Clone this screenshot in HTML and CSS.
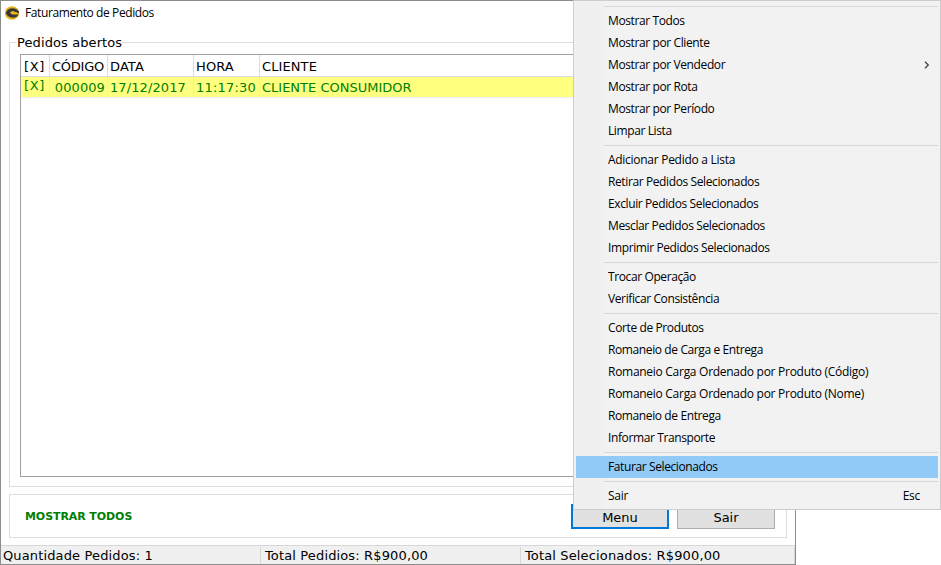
FILE: index.html
```html
<!DOCTYPE html>
<html lang="pt-BR">
<head>
<meta charset="utf-8">
<title>Faturamento de Pedidos</title>
<link rel="stylesheet" href="styles.css">
</head>
<body>
<main class="window">
  <header class="titlebar">
    <svg class="logo" viewBox="0 0 16 16">
      <ellipse cx="8" cy="8" rx="7.2" ry="6.7" fill="#e5b51d"/>
      <path d="M3 5.4Q6 2.4 10.6 3.5Q13 4.2 14.8 6.2L15 8.5L12 7.2L8.3 6.2L6 7.5L7.8 9L14.6 9.6Q13 12.6 9.8 12.7Q5.4 12.8 3.4 10.5L1.8 8.3Z" fill="#39363a"/>
      <path d="M6.2 7.7Q8.3 5.8 10.3 6.5L14.8 8.6L11.8 9.5L8.2 9.4Z" fill="#e5b51d"/>
    </svg>
    <span class="title">Faturamento de Pedidos</span>
  </header>
  <section class="orders">
    <h2 class="legend">Pedidos abertos</h2>
    <div class="grid">
      <div class="row head"><span class="check">[X]</span><span class="code">CÓDIGO</span><span>DATA</span><span>HORA</span><span>CLIENTE</span></div>
      <div class="row selected"><span class="check mark">[X]</span><span class="num">000009</span><span class="date">17/12/2017</span><span class="num">11:17:30</span><span>CLIENTE CONSUMIDOR</span></div>
    </div>
  </section>
  <section class="actions">
    <strong class="filter">MOSTRAR TODOS</strong>
    <button class="btn focus">Menu</button>
    <button class="btn">Sair</button>
  </section>
  <footer class="status">
    <span>Quantidade Pedidos: 1</span><span>Total Pedidios: R$900,00</span><span>Total Selecionados: R$900,00</span>
  </footer>
</main>
<nav class="menu">
  <ul>
    <li class="sep"></li>
    <li>Mostrar Todos</li>
    <li>Mostrar por Cliente</li>
    <li>Mostrar por Vendedor<svg class="arrow" viewBox="0 0 6 8"><path d="M1 .7L4.3 4L1 7.3" fill="none" stroke="#444" stroke-width="1.3"/></svg></li>
    <li>Mostrar por Rota</li>
    <li>Mostrar por Período</li>
    <li>Limpar Lista</li>
    <li class="sep"></li>
    <li class="wide">Adicionar Pedido a Lista</li>
    <li>Retirar Pedidos Selecionados</li>
    <li>Excluir Pedidos Selecionados</li>
    <li>Mesclar Pedidos Selecionados</li>
    <li>Imprimir Pedidos Selecionados</li>
    <li class="sep"></li>
    <li>Trocar Operação</li>
    <li>Verificar Consistência</li>
    <li class="sep"></li>
    <li>Corte de Produtos</li>
    <li>Romaneio de Carga e Entrega</li>
    <li class="wide">Romaneio Carga Ordenado por Produto (Código)</li>
    <li class="wide">Romaneio Carga Ordenado por Produto (Nome)</li>
    <li>Romaneio de Entrega</li>
    <li>Informar Transporte</li>
    <li class="sep"></li>
    <li class="active">Faturar Selecionados</li>
    <li class="sep"></li>
    <li class="wide">Sair<kbd>Esc</kbd></li>
  </ul>
</nav>
</body>
</html>
```
FILE: styles.css
```css
* { box-sizing: border-box; }
body {
  margin: 0;
  width: 941px;
  height: 565px;
  overflow: hidden;
  background: #fff;
  color: #000;
  font: 13px/20px "DejaVu Sans", sans-serif;
}
.window {
  display: flex;
  flex-direction: column;
  width: 796px;
  height: 565px;
  border: 1px solid #8c8c8c;
}
.titlebar {
  display: flex;
  align-items: center;
  height: 23px;
  padding-left: 3px;
  font: 12px/22px "Open Sans", sans-serif;
}
.logo { width: 16px; height: 16px; margin-right: 5px; }
.title { letter-spacing: -0.4px; }
.orders {
  height: 445px;
  margin: 18px 8px 0;
  padding: 0 10px;
  border: 1px solid #dcdcdc;
}
.legend {
  width: 106px;
  height: 20px;
  margin: -11px 0 0 -4px;
  padding: 1px 0 0 1px;
  background: #fff;
  font: inherit;
  letter-spacing: 0.1px;
  white-space: nowrap;
}
.grid {
  height: 423px;
  margin-top: 2px;
  border: 1px solid #a0a0a5;
}
.row {
  display: grid;
  grid-template-columns: 29px 58px 86px 66px 1fr;
  height: 22px;
  line-height: 23px;
  border-bottom: 1px solid #dcdcdc;
  white-space: nowrap;
}
.row span { padding-left: 2px; border-right: 1px solid #dcdcdc; }
.row .check { padding-left: 3px; letter-spacing: 0.6px; }
.row span:last-child { border-right: 0; }
.head { letter-spacing: 0.1px; }
.head .code { letter-spacing: -0.25px; }
.selected {
  height: 21px;
  line-height: 21px;
  background: #ffff80;
  border-color: #eee;
  color: #008000;
}
.selected span { border-color: #f0f0b0; }
.selected .num { padding: 0 2px 0 0; text-align: right; letter-spacing: 0.1px; }
.selected .date { letter-spacing: 0.1px; }
.selected .mark { line-height: 18px; }
.selected .date + .num { padding-right: 3px; letter-spacing: 0.2px; }
.actions {
  display: flex;
  align-items: center;
  height: 44px;
  margin: 7px 8px 0;
  padding: 0 11px 0 15px;
  border: 1px solid #dcdcdc;
}
.filter {
  flex: 1;
  padding-top: 2px;
  color: #008000;
  font: bold 11px/20px "DejaVu Sans", sans-serif;
  letter-spacing: -0.08px;
}
.btn {
  width: 98px;
  height: 25px;
  margin: 0 0 0 8px;
  padding: 2px 0 0;
  border: 1px solid #adadad;
  background: #e1e1e1;
  color: #000;
  font: 13px "DejaVu Sans", sans-serif;
}
.focus { border: 2px solid #0078d7; }
.status {
  display: flex;
  height: 19px;
  margin-top: 7px;
  border-top: 1px solid #d7d7d7;
  background: #f0f0f0;
  letter-spacing: 0.14px;
}
.status span {
  width: 260px;
  margin-top: 1px;
  padding-left: 4px;
  border-right: 1px solid #d7d7d7;
  line-height: 18px;
}
.status span:first-child { padding-left: 2px; }
.status span:last-child { width: 274px; }
.menu {
  position: absolute;
  left: 573px;
  top: 0;
  width: 368px;
  height: 510px;
  padding: 2px;
  border: 1px solid #ccc;
  background: linear-gradient(90deg, #f0f0f0 30px, #f2f2f2 30px);
}
.menu ul { margin: 0; padding: 0; list-style: none; }
.menu li {
  display: flex;
  align-items: center;
  justify-content: space-between;
  height: 22px;
  padding-left: 32px;
  font: 12px/22px "Open Sans", sans-serif;
  letter-spacing: -0.39px;
  white-space: nowrap;
}
.menu .wide { letter-spacing: -0.28px; }
.menu .sep {
  height: 1px;
  margin: 3px 0 3px 28px;
  padding: 0;
  background: #d7d7d7;
}
.menu .active { background: #91c9f7; }
.menu kbd { margin-right: 18px; font: inherit; }
.arrow { width: 6px; height: 8px; margin-right: 8px; }
```
